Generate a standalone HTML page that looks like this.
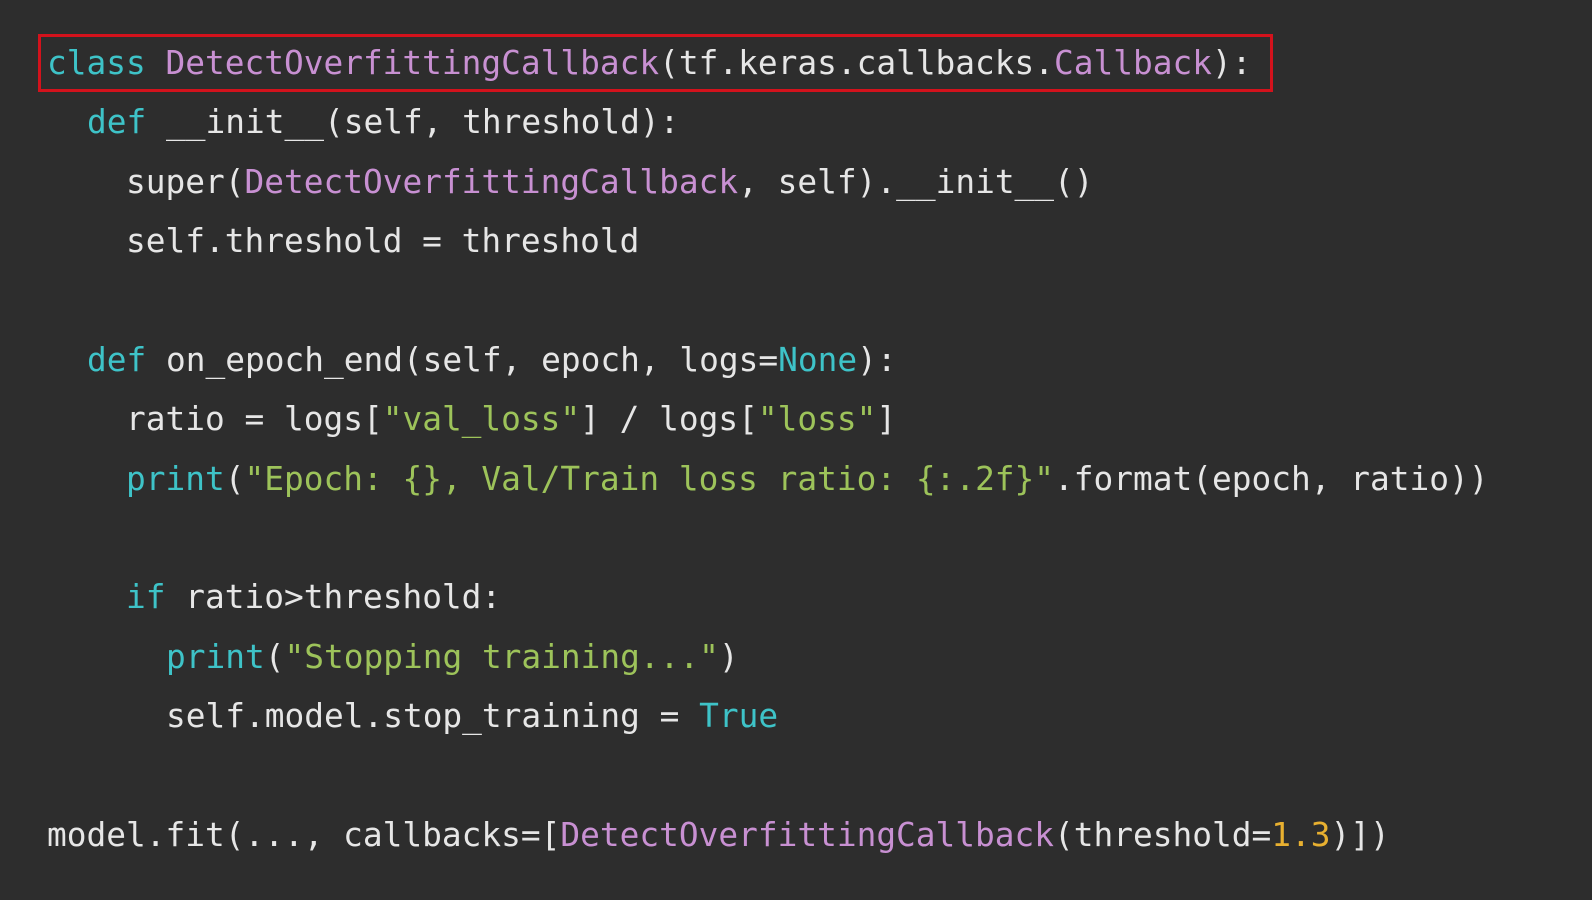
<!DOCTYPE html>
<html><head><meta charset="utf-8"><style>
html,body{margin:0;padding:0;background:#2d2d2d;width:1592px;height:900px;overflow:hidden}
.l{position:absolute;font-family:"DejaVu Sans Mono","Liberation Mono",monospace;font-size:32.8px;line-height:40px;height:40px;color:#e6e6e6;white-space:pre}
.k{color:#3ec3c8}.p{color:#c890d2}.s{color:#9dc35a}.n{color:#e8b030}
.box{position:absolute;left:38px;top:34px;width:1229px;height:52px;border:3px solid #d3121c}
</style></head><body>
<div class="box"></div>
<div class="l" style="left:47px;top:43px"><span class="k">class</span> <span class="p">DetectOverfittingCallback</span>(tf.keras.callbacks.<span class="p">Callback</span>):</div>
<div class="l" style="left:87px;top:102px"><span class="k">def</span> __init__(self, threshold):</div>
<div class="l" style="left:126px;top:162px">super(<span class="p">DetectOverfittingCallback</span>, self).__init__()</div>
<div class="l" style="left:126px;top:221px">self.threshold = threshold</div>
<div class="l" style="left:87px;top:340px"><span class="k">def</span> on_epoch_end(self, epoch, logs=<span class="k">None</span>):</div>
<div class="l" style="left:126px;top:399px">ratio = logs[<span class="s">"val_loss"</span>] / logs[<span class="s">"loss"</span>]</div>
<div class="l" style="left:126px;top:459px"><span class="k">print</span>(<span class="s">"Epoch: {}, Val/Train loss ratio: {:.2f}"</span>.format(epoch, ratio))</div>
<div class="l" style="left:126px;top:577px"><span class="k">if</span> ratio&gt;threshold:</div>
<div class="l" style="left:166px;top:637px"><span class="k">print</span>(<span class="s">"Stopping training..."</span>)</div>
<div class="l" style="left:166px;top:696px">self.model.stop_training = <span class="k">True</span></div>
<div class="l" style="left:47px;top:815px">model.fit(..., callbacks=[<span class="p">DetectOverfittingCallback</span>(threshold=<span class="n">1.3</span>)])</div>
</body></html>
